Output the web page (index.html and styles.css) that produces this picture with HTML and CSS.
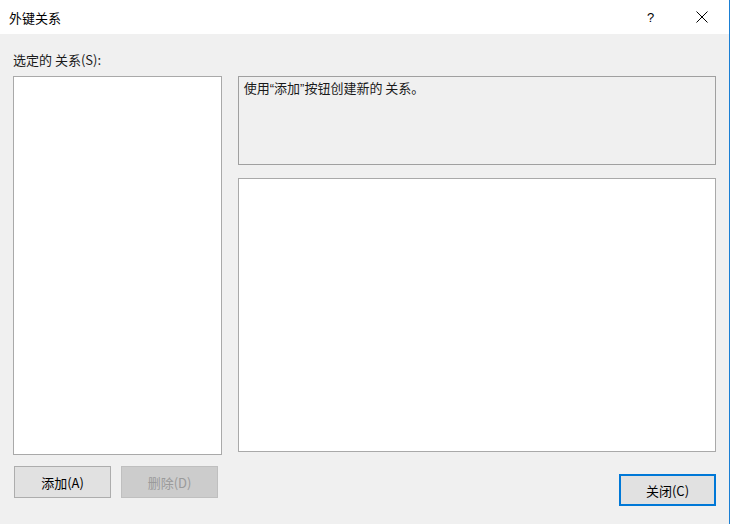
FILE: index.html
```html
<!DOCTYPE html>
<html lang="zh-CN">
<head>
<meta charset="utf-8">
<title>外键关系</title>
<link rel="stylesheet" href="styles.css">
</head>
<body>
<div class="dialog">
  <div class="titlebar">
    <span class="title">外键关系</span>
    <span class="help">?</span>
    <span class="close-x">
      <svg width="12" height="12" viewBox="0 0 12 12"><path d="M0.5 0.5 L11.5 11.5 M11.5 0.5 L0.5 11.5" stroke="#000" stroke-width="1" fill="none"/></svg>
    </span>
  </div>
  <div class="main">
    <div class="label">选定的 关系(S):</div>
    <div class="columns">
      <div class="left">
        <div class="listbox"></div>
        <div class="btn-row">
          <button class="btn">添加(A)</button>
          <button class="btn disabled">删除(D)</button>
        </div>
      </div>
      <div class="right">
        <div class="info"><span>使用</span><span class="q">“</span><span>添加</span><span class="q">”</span><span>按钮创建新的 关系。</span></div>
        <div class="grid"></div>
        <div class="footer">
          <button class="btn default">关闭(C)</button>
        </div>
      </div>
    </div>
  </div>
</div>
</body>
</html>
```
FILE: styles.css
```css
html, body {
  margin: 0;
  padding: 0;
  background: #ffffff;
}
body {
  width: 731px;
  height: 524px;
  overflow: hidden;
  font-family: "Noto Sans CJK SC", "Noto Sans", sans-serif;
  font-size: 13px;
  color: #000;
}
.dialog {
  width: 730px;
  height: 524px;
  box-sizing: border-box;
  border-right: 1px solid #1a7fd4;
  background: #f0f0f0;
  display: flex;
  flex-direction: column;
}
.titlebar {
  height: 34px;
  background: #ffffff;
  display: flex;
  align-items: center;
  padding-left: 9px;
  box-sizing: border-box;
}
.title {
  font-size: 13px;
  flex: 1;
}
.help {
  font-family: "Liberation Sans", sans-serif;
  font-size: 13px;
  width: 10px;
  margin-right: 39px;
}
.close-x {
  display: flex;
  align-items: center;
  margin-right: 21px;
  height: 12px;
}
.main {
  padding: 17px 13px 0 13px;
  display: flex;
  flex-direction: column;
}
.label {
  height: 17px;
  line-height: 17px;
  margin-bottom: 8px;
  color: #1a1a1a;
}
.columns {
  display: flex;
  gap: 16px;
}
.left {
  width: 209px;
  display: flex;
  flex-direction: column;
}
.listbox {
  height: 379px;
  box-sizing: border-box;
  background: #fff;
  border: 1px solid #a9a9a9;
}
.btn-row {
  display: flex;
  gap: 10px;
  margin-top: 11px;
  padding-left: 1px;
}
.btn {
  width: 97px;
  height: 32px;
  box-sizing: border-box;
  border: 1px solid #adadad;
  background: #e1e1e1;
  font-family: "Noto Sans CJK SC", "Noto Sans", sans-serif;
  font-size: 13px;
  color: #000;
  padding: 0;
  margin: 0;
}
.btn.disabled {
  background: #cccccc;
  border-color: #bfbfbf;
  color: #9a9a9a;
}
.btn.default {
  border: 2px solid #0078d7;
  height: 32px;
}
.right {
  width: 479px;
  display: flex;
  flex-direction: column;
}
.info {
  height: 89px;
  box-sizing: border-box;
  border: 1px solid #a0a0a0;
  background: #f0f0f0;
  padding: 1px 5px;
  line-height: 19px;
  color: #1a1a1a;
}
.q {
  font-family: "Liberation Sans", sans-serif;
}
.grid {
  margin-top: 13px;
  height: 274px;
  box-sizing: border-box;
  background: #fff;
  border: 1px solid #a9a9a9;
}
.footer {
  display: flex;
  justify-content: flex-end;
  margin-top: 22px;
}
```
